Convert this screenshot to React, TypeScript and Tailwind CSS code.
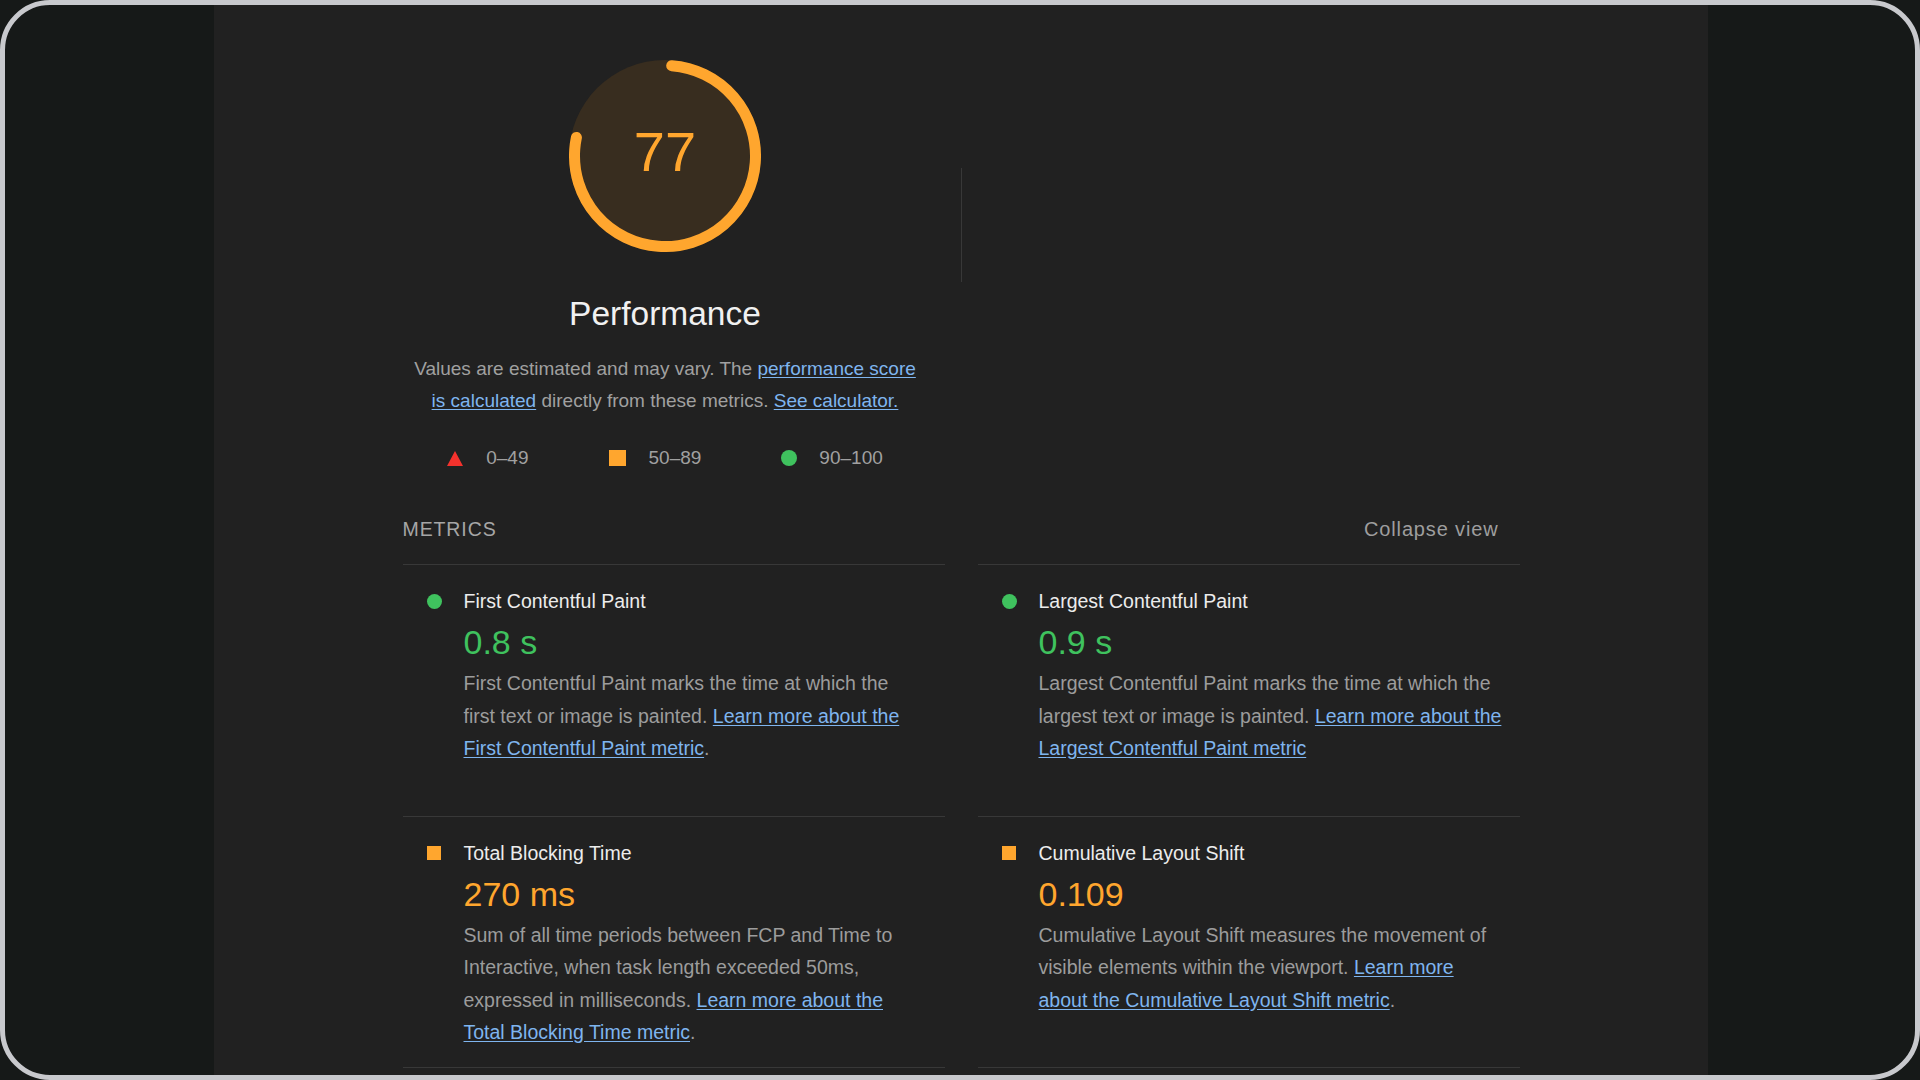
import type { ReactNode } from "react";

const font = "font-['Liberation_Sans','Helvetica_Neue',Arial,sans-serif]";

type Rating = "pass" | "average" | "fail";

type Metric = {
  id: string;
  title: string;
  value: string;
  rating: Rating;
  desc: ReactNode;
};

function Link({ children }: { children: ReactNode }) {
  return <a className="text-[#7fb5ef] underline underline-offset-[2px]">{children}</a>;
}

const metrics: Metric[] = [
  {
    id: "fcp",
    title: "First Contentful Paint",
    value: "0.8 s",
    rating: "pass",
    desc: (
      <>
        First Contentful Paint marks the time at which the
        <br />
        first text or image is painted.{" "}
        <Link>
          Learn more about the
          <br />
          First Contentful Paint metric
        </Link>
        .
      </>
    ),
  },
  {
    id: "lcp",
    title: "Largest Contentful Paint",
    value: "0.9 s",
    rating: "pass",
    desc: (
      <>
        Largest Contentful Paint marks the time at which the
        <br />
        largest text or image is painted.{" "}
        <Link>
          Learn more about the
          <br />
          Largest Contentful Paint metric
        </Link>
      </>
    ),
  },
  {
    id: "tbt",
    title: "Total Blocking Time",
    value: "270 ms",
    rating: "average",
    desc: (
      <>
        Sum of all time periods between FCP and Time to
        <br />
        Interactive, when task length exceeded 50ms,
        <br />
        expressed in milliseconds.{" "}
        <Link>
          Learn more about the
          <br />
          Total Blocking Time metric
        </Link>
        .
      </>
    ),
  },
  {
    id: "cls",
    title: "Cumulative Layout Shift",
    value: "0.109",
    rating: "average",
    desc: (
      <>
        Cumulative Layout Shift measures the movement of
        <br />
        visible elements within the viewport.{" "}
        <Link>
          Learn more
          <br />
          about the Cumulative Layout Shift metric
        </Link>
        .
      </>
    ),
  },
];

function RatingIcon({ rating }: { rating: Rating }) {
  if (rating === "pass") return <span className="block h-[15px] w-[15px] rounded-full bg-[#3fc25e]" />;
  if (rating === "average") return <span className="block h-[14px] w-[14px] bg-[#ffa62e]" />;
  return (
    <svg width="16" height="15" viewBox="0 0 16 15">
      <polygon points="8,0 16,15 0,15" fill="#f4322d" />
    </svg>
  );
}

function Gauge({ score }: { score: number }) {
  const r = 90.5;
  const c = 2 * Math.PI * r;
  return (
    <div className="relative h-[192px] w-[192px]">
      <svg width="192" height="192" viewBox="0 0 192 192">
        <circle cx="96" cy="96" r="96" fill="#382d1f" />
        <circle
          cx="96"
          cy="96"
          r={r}
          fill="none"
          stroke="#ffa62e"
          strokeWidth="11"
          strokeLinecap="round"
          strokeDasharray={`${(score / 100) * c} ${c}`}
          transform="rotate(-85.75 96 96)"
        />
      </svg>
      <div className="absolute inset-0 flex items-center justify-center pb-[8px] text-[56px] leading-none text-[#ffa62e]">
        {score}
      </div>
    </div>
  );
}

function MetricItem({ m, last }: { m: Metric; last: boolean }) {
  const valueColor = m.rating === "pass" ? "text-[#3fc25e]" : m.rating === "average" ? "text-[#ffa62e]" : "text-[#f4322d]";
  return (
    <div className={`flex border-t border-[#383838] pt-[20px] pb-[18px] ${last ? "border-b" : ""}`}>
      <div className="flex h-[32px] w-[61px] shrink-0 items-center justify-center pl-[2px]">
        <RatingIcon rating={m.rating} />
      </div>
      <div className="flex flex-col">
        <div className="text-[19.5px] leading-[32px] text-[#ececec]">{m.title}</div>
        <div className={`text-[34px] leading-[50px] ${valueColor}`}>{m.value}</div>
        <p className="whitespace-nowrap text-[19.5px] leading-[32.4px] text-[#9c9c9c]">{m.desc}</p>
      </div>
    </div>
  );
}

export default function App() {
  return (
    <div className={`h-screen w-screen overflow-hidden bg-[#161918] ${font}`}>
      <div className="flex h-full justify-center overflow-hidden rounded-[50px] border-[5px] border-[#c8c9cd] bg-[#161918] pl-[2px]">
        <main className="h-full w-[1494px] shrink-0 bg-[#212121] pt-[55px]">
          <div className="mx-auto w-[1117px]">
            <div className="flex">
              <div className="flex w-[525px] flex-col items-center">
                <Gauge score={77} />
                <h2 className="mt-[42px] text-[33.5px] leading-[40px] text-[#f1f1f1]">Performance</h2>
                <p className="mt-[19px] whitespace-nowrap text-center text-[19px] leading-[32.4px] text-[#a0a0a0]">
                  Values are estimated and may vary. The <Link>performance score</Link>
                  <br />
                  <Link>is calculated</Link> directly from these metrics. <Link>See calculator.</Link>
                </p>
                <div className="mt-[24.5px] flex h-[32px] items-center gap-[80px] text-[19px] text-[#a0a0a0]">
                  <div className="flex items-center gap-[23px]">
                    <RatingIcon rating="fail" />
                    <span>0–49</span>
                  </div>
                  <div className="flex items-center gap-[23px]">
                    <span className="block h-[16px] w-[17px] bg-[#ffa62e]" />
                    <span>50–89</span>
                  </div>
                  <div className="flex items-center gap-[22px]">
                    <span className="block h-[16px] w-[16px] rounded-full bg-[#3fc25e]" />
                    <span>90–100</span>
                  </div>
                </div>
              </div>
              <div className="ml-[33px] mt-[108px] h-[114px] w-px bg-[#383838]" />
            </div>

            <div className="mt-[39px] flex h-[32px] items-center justify-between pr-[21px]">
              <span className="text-[19.5px] font-medium tracking-[0.9px] text-[#a6a6a6]">METRICS</span>
              <span className="text-[20px] tracking-[0.85px] text-[#9e9e9e]">Collapse view</span>
            </div>

            <div className="mt-[19px] grid auto-rows-fr grid-cols-2 gap-x-[33px]">
              {metrics.map((m, i) => (
                <MetricItem key={m.id} m={m} last={i >= metrics.length - 2} />
              ))}
            </div>
          </div>
        </main>
      </div>
    </div>
  );
}
